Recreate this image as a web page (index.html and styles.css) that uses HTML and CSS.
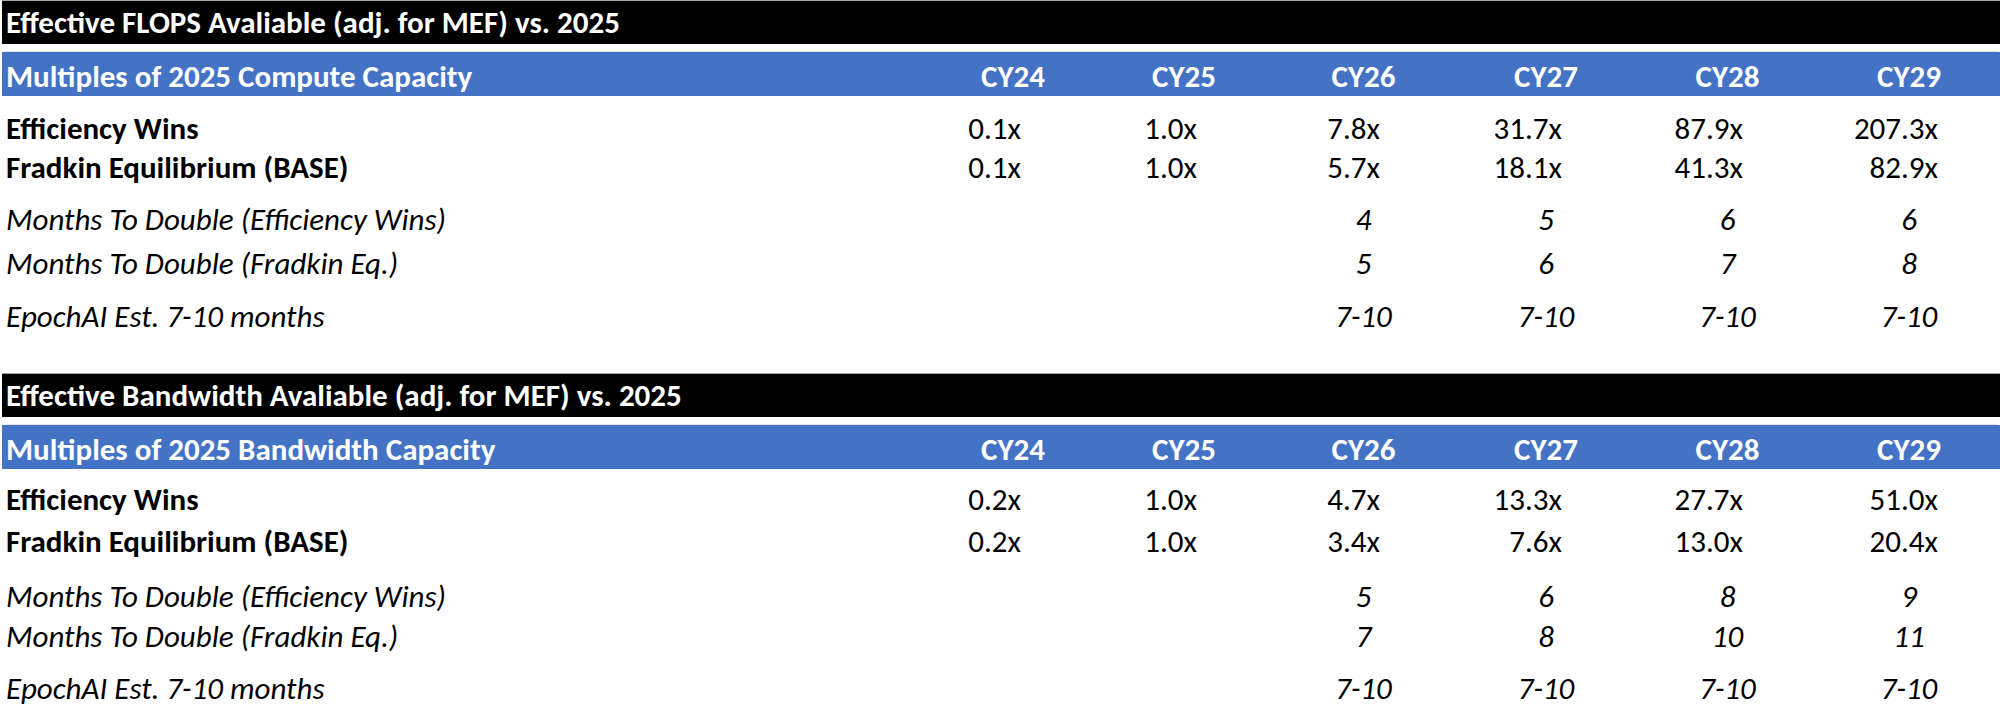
FILE: index.html
```html
<!DOCTYPE html>
<html lang="en">
<head>
<meta charset="utf-8">
<title>Effective FLOPS and Bandwidth</title>
<link rel="stylesheet" href="styles.css">
</head>
<body>
<div class="sheet">
  <section class="block block-flops">
    <div class="title-bar">Effective FLOPS Avaliable (adj. for MEF) vs. 2025</div>
    <div class="grid head">
      <div class="label">Multiples of 2025 Compute Capacity</div>
      <div>CY24</div><div>CY25</div><div>CY26</div><div>CY27</div><div>CY28</div><div>CY29</div>
    </div>
    <div class="grid row strong r-eff">
      <div class="label">Efficiency Wins</div>
      <div class="num">0.1x</div><div class="num">1.0x</div><div class="num">7.8x</div><div class="num">31.7x</div><div class="num">87.9x</div><div class="num">207.3x</div>
    </div>
    <div class="grid row strong r-fr">
      <div class="label">Fradkin Equilibrium (BASE)</div>
      <div class="num">0.1x</div><div class="num">1.0x</div><div class="num">5.7x</div><div class="num">18.1x</div><div class="num">41.3x</div><div class="num">82.9x</div>
    </div>
    <div class="grid row note r-m1">
      <div class="label">Months To Double (Efficiency Wins)</div>
      <div></div><div></div><div class="mo">4</div><div class="mo">5</div><div class="mo">6</div><div class="mo">6</div>
    </div>
    <div class="grid row note r-m2">
      <div class="label">Months To Double (Fradkin Eq.)</div>
      <div></div><div></div><div class="mo">5</div><div class="mo">6</div><div class="mo">7</div><div class="mo">8</div>
    </div>
    <div class="grid row note r-ep">
      <div class="label">EpochAI Est. 7-10 months</div>
      <div></div><div></div><div class="mo">7-10</div><div class="mo">7-10</div><div class="mo">7-10</div><div class="mo">7-10</div>
    </div>
  </section>

  <section class="block block-bw">
    <div class="title-bar">Effective Bandwidth Avaliable (adj. for MEF) vs. 2025</div>
    <div class="grid head">
      <div class="label">Multiples of 2025 Bandwidth Capacity</div>
      <div>CY24</div><div>CY25</div><div>CY26</div><div>CY27</div><div>CY28</div><div>CY29</div>
    </div>
    <div class="grid row strong r-eff">
      <div class="label">Efficiency Wins</div>
      <div class="num">0.2x</div><div class="num">1.0x</div><div class="num">4.7x</div><div class="num">13.3x</div><div class="num">27.7x</div><div class="num">51.0x</div>
    </div>
    <div class="grid row strong r-fr">
      <div class="label">Fradkin Equilibrium (BASE)</div>
      <div class="num">0.2x</div><div class="num">1.0x</div><div class="num">3.4x</div><div class="num">7.6x</div><div class="num">13.0x</div><div class="num">20.4x</div>
    </div>
    <div class="grid row note r-m1">
      <div class="label">Months To Double (Efficiency Wins)</div>
      <div></div><div></div><div class="mo">5</div><div class="mo">6</div><div class="mo">8</div><div class="mo">9</div>
    </div>
    <div class="grid row note r-m2">
      <div class="label">Months To Double (Fradkin Eq.)</div>
      <div></div><div></div><div class="mo">7</div><div class="mo">8</div><div class="mo">10</div><div class="mo">11</div>
    </div>
    <div class="grid row note r-ep">
      <div class="label">EpochAI Est. 7-10 months</div>
      <div></div><div></div><div class="mo">7-10</div><div class="mo">7-10</div><div class="mo">7-10</div><div class="mo">7-10</div>
    </div>
  </section>
</div>
</body>
</html>
```

FILE: styles.css
```css
html, body {
  margin: 0;
  padding: 0;
  background: #ffffff;
}

body {
  font-family: Carlito, Lato, "Open Sans", sans-serif;
  font-size: 31px;
  color: #000000;
  overflow: hidden;
}

.sheet {
  width: 2000px;
  padding-left: 2px;
  box-sizing: border-box;
}

.block-bw {
  margin-top: 37px;
}

.title-bar {
  background: #000000;
  color: #ffffff;
  font-weight: 700;
  height: 43px;
  line-height: 43px;
  padding-left: 4px;
  border-top: 1px solid #a6a6a6;
  white-space: nowrap;
}

.grid {
  display: grid;
  grid-template-columns: 928px 166px 176px 183px 182px 181px 182px;
  white-space: nowrap;
  box-sizing: border-box;
}

.head {
  margin-top: 8px;
  height: 44px;
  padding-top: 5px;
  line-height: 39px;
  background: #4472c4;
  color: #ffffff;
  font-weight: 700;
  text-align: center;
  box-shadow: 0 -4px 0 -3px #e3e3e3;
}

.label {
  text-align: left;
  padding-left: 4px;
}

.row {
  height: 40px;
  line-height: 40px;
}

.strong .label {
  font-weight: 700;
}

.note {
  font-style: italic;
}

.num {
  text-align: right;
  padding-right: 75px;
}

.num:last-child {
  padding-right: 62px;
}

.mo {
  text-align: center;
}

/* row spacing, FLOPS block */
.block-flops .r-eff { margin-top: 12px; }
.block-flops .r-fr { height: 39px; line-height: 39px; }
.block-flops .r-m1 { margin-top: 12px; }
.block-flops .r-m2 { margin-top: 4px; }
.block-flops .r-ep { margin-top: 13px; }

/* row spacing, bandwidth block */
.block-bw .r-eff { margin-top: 10px; }
.block-bw .r-fr { margin-top: 2px; }
.block-bw .r-m1 { margin-top: 15px; }
.block-bw .r-m2 { margin-top: 0; }
.block-bw .r-ep { margin-top: 12px; }
```
